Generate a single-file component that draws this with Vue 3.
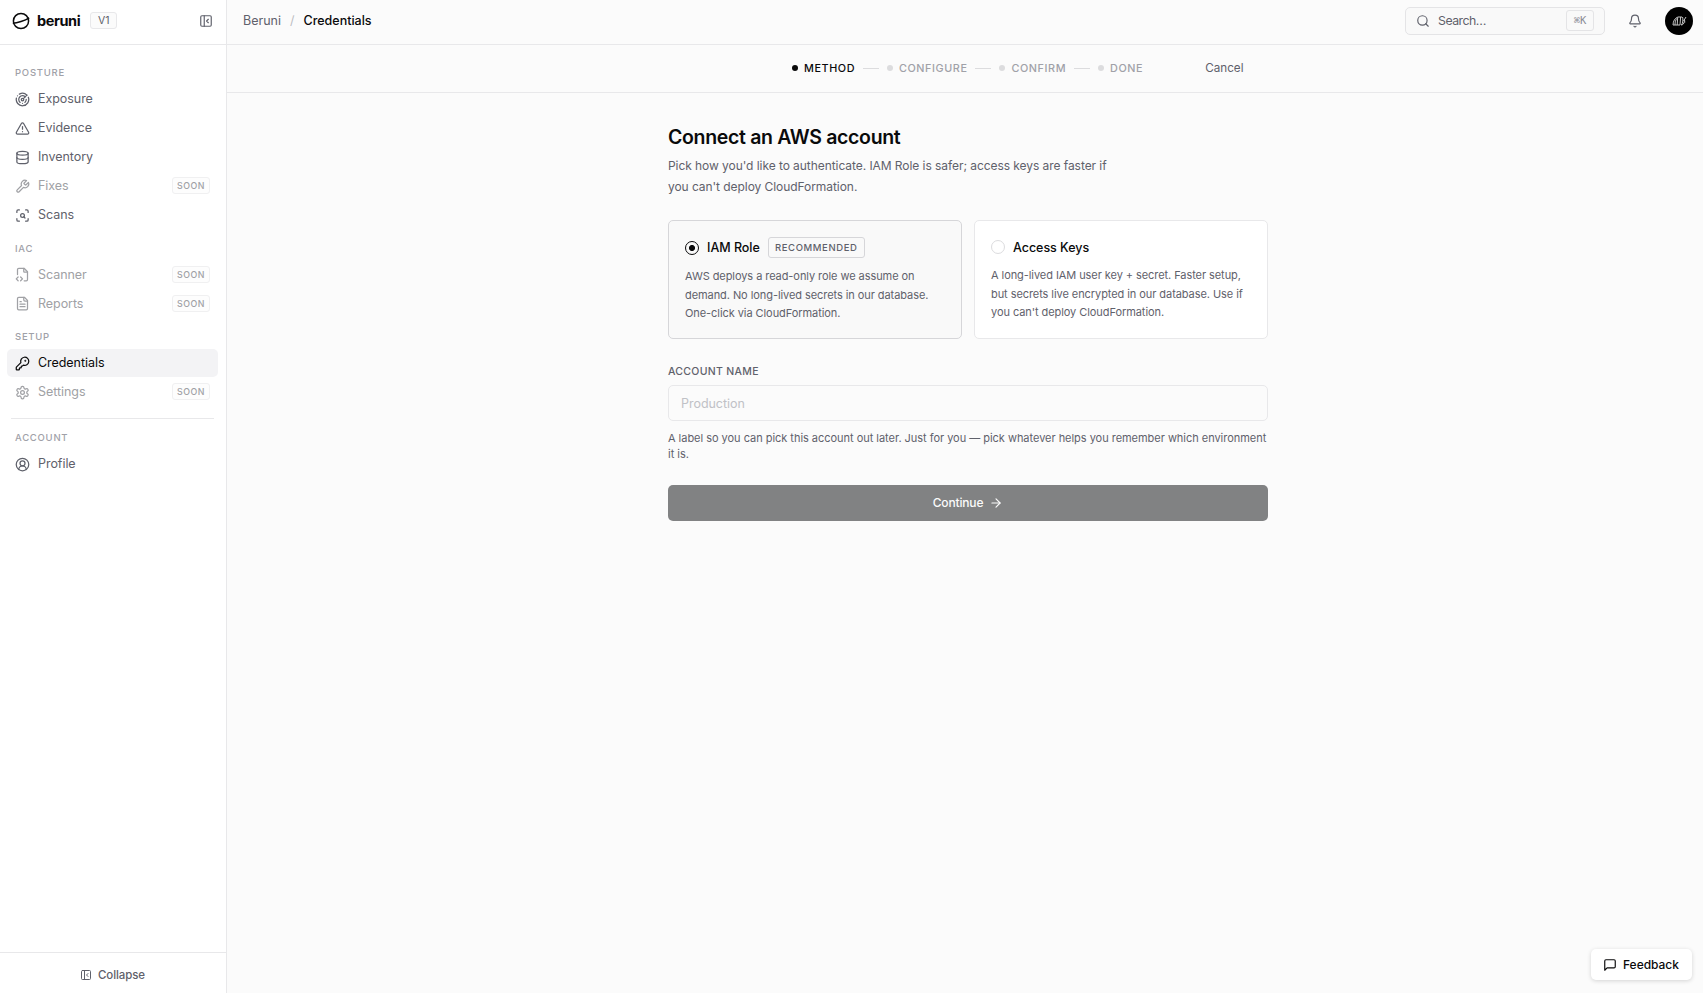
<template>
  <div class="app">
    <aside class="sidebar">
      <div class="brand">
        <svg class="logo" viewBox="0 0 18 18" fill="none" stroke="currentColor" stroke-width="1.5">
          <circle cx="9" cy="9" r="7.6" />
          <path d="M.8 11.3C5 11.2 13 8.6 17.2 5.9" />
        </svg>
        <span class="brand-name">beruni</span>
        <span class="version">V1</span>
        <svg class="toggle icon" viewBox="0 0 24 24" v-html="icons.panel"></svg>
      </div>

      <nav class="nav">
        <section v-for="group in groups" :key="group.title" class="group" :class="{ divided: group.divided }">
          <h2 class="group-title">{{ group.title }}</h2>
          <a v-for="item in group.items" :key="item.label" class="item" :class="{ active: item.active, soon: item.soon }">
            <svg class="icon" viewBox="0 0 24 24" v-html="icons[item.icon]"></svg>
            <span class="item-label">{{ item.label }}</span>
            <span v-if="item.soon" class="soon-badge">SOON</span>
          </a>
        </section>
      </nav>

      <button class="collapse">
        <svg class="icon" viewBox="0 0 24 24" v-html="icons.panel"></svg>
        <span>Collapse</span>
      </button>
    </aside>

    <div class="content">
      <header class="topbar">
        <div class="crumbs">
          <span>Beruni</span>
          <span class="slash">/</span>
          <span class="current">Credentials</span>
        </div>
        <div class="search">
          <svg class="icon" viewBox="0 0 24 24" v-html="icons.search"></svg>
          <span class="search-text">Search…</span>
          <kbd>⌘K</kbd>
        </div>
        <svg class="bell icon" viewBox="0 0 24 24" v-html="icons.bell"></svg>
        <svg class="avatar" viewBox="0 0 28 28" fill="none">
          <circle cx="14" cy="14" r="14" fill="#000" />
          <g stroke="#c4c4c4" stroke-width="1">
            <path d="M8 18c0-4 2-7 5-8M10 18c0-3 .5-5 2-6.5M12.2 18l.5-7.5M15 18l.6-8M8 18h7M13 10h4M17.5 10c.7 2 .5 6-1 8M16 18c2 0 3-1.5 3.3-3.5M18.5 14l2.5-4M19.5 12.5l.3 3" />
          </g>
        </svg>
      </header>

      <div class="steps">
        <ol>
          <li v-for="(step, i) in steps" :key="step" :class="{ on: i === 0 }">
            <span v-if="i > 0" class="line"></span>
            <span class="dot"></span>
            <span class="step-text">{{ step }}</span>
          </li>
        </ol>
        <a class="cancel">Cancel</a>
      </div>

      <main class="main">
        <h1>Connect an AWS account</h1>
        <p class="intro">Pick how you'd like to authenticate. IAM Role is safer; access keys are faster if<br />you can't deploy CloudFormation.</p>

        <div class="methods">
          <div v-for="m in methods" :key="m.id" class="method" :class="{ selected: method === m.id }" @click="method = m.id">
            <div class="method-head">
              <span class="radio"></span>
              <span class="method-name">{{ m.name }}</span>
              <span v-if="m.recommended" class="recommended">RECOMMENDED</span>
            </div>
            <p><template v-for="(line, i) in m.lines" :key="i"><br v-if="i" />{{ line }}</template></p>
          </div>
        </div>

        <label for="account-name">ACCOUNT NAME</label>
        <input id="account-name" v-model="accountName" type="text" placeholder="Production" />
        <p class="hint">A label so you can pick this account out later. Just for you — pick whatever helps you remember which environment<br />it is.</p>

        <button class="continue" :disabled="!accountName">
          <span>Continue</span>
          <svg class="icon" viewBox="0 0 24 24" v-html="icons.arrow"></svg>
        </button>
      </main>
    </div>

    <button class="feedback">
      <svg class="icon" viewBox="0 0 24 24" v-html="icons.message"></svg>
      <span>Feedback</span>
    </button>
  </div>
</template>

<script setup>
import { ref } from 'vue'

const method = ref('iam')
const accountName = ref('')

const steps = ['METHOD', 'CONFIGURE', 'CONFIRM', 'DONE']

const groups = [
  {
    title: 'POSTURE',
    items: [
      { label: 'Exposure', icon: 'radar' },
      { label: 'Evidence', icon: 'alert' },
      { label: 'Inventory', icon: 'database' },
      { label: 'Fixes', icon: 'wrench', soon: true },
      { label: 'Scans', icon: 'scan' }
    ]
  },
  {
    title: 'IAC',
    items: [
      { label: 'Scanner', icon: 'fileCode', soon: true },
      { label: 'Reports', icon: 'fileText', soon: true }
    ]
  },
  {
    title: 'SETUP',
    items: [
      { label: 'Credentials', icon: 'key', active: true },
      { label: 'Settings', icon: 'settings', soon: true }
    ]
  },
  {
    title: 'ACCOUNT',
    divided: true,
    items: [{ label: 'Profile', icon: 'user' }]
  }
]

const methods = [
  {
    id: 'iam',
    name: 'IAM Role',
    recommended: true,
    lines: ['AWS deploys a read-only role we assume on', 'demand. No long-lived secrets in our database.', 'One-click via CloudFormation.']
  },
  {
    id: 'keys',
    name: 'Access Keys',
    lines: ['A long-lived IAM user key + secret. Faster setup,', 'but secrets live encrypted in our database. Use if', "you can't deploy CloudFormation."]
  }
]

const icons = {
  panel: '<rect width="18" height="18" x="3" y="3" rx="2"/><path d="M9 3v18"/><path d="m16 15-3-3 3-3"/>',
  radar: '<path d="M19.07 4.93A10 10 0 0 0 6.99 3.34"/><path d="M4 6h.01"/><path d="M2.29 9.62A10 10 0 1 0 21.31 8.35"/><path d="M16.24 7.76A6 6 0 1 0 8.23 16.67"/><path d="M12 18h.01"/><path d="M17.99 11.66A6 6 0 0 1 15.77 16.67"/><circle cx="12" cy="12" r="2"/><path d="m13.41 10.59 5.66-5.66"/>',
  alert: '<path d="m21.73 18-8-14a2 2 0 0 0-3.48 0l-8 14A2 2 0 0 0 4 21h16a2 2 0 0 0 1.73-3"/><path d="M12 9v4"/><path d="M12 17h.01"/>',
  database: '<ellipse cx="12" cy="5" rx="9" ry="3"/><path d="M3 5v14a9 3 0 0 0 18 0V5"/><path d="M3 12a9 3 0 0 0 18 0"/>',
  wrench: '<path d="M14.7 6.3a1 1 0 0 0 0 1.4l1.6 1.6a1 1 0 0 0 1.4 0l3.77-3.77a6 6 0 0 1-7.94 7.94l-6.91 6.91a2.12 2.12 0 0 1-3-3l6.91-6.91a6 6 0 0 1 7.94-7.94z"/>',
  scan: '<path d="M3 7V5a2 2 0 0 1 2-2h2"/><path d="M17 3h2a2 2 0 0 1 2 2v2"/><path d="M21 17v2a2 2 0 0 1-2 2h-2"/><path d="M7 21H5a2 2 0 0 1-2-2v-2"/><circle cx="12" cy="12" r="3"/><path d="m16 16-1.9-1.9"/>',
  fileCode: '<path d="M4 12.15V4a2 2 0 0 1 2-2h8.5L20 7.5V20a2 2 0 0 1-2 2h-3.35"/><path d="M14 2v5a1 1 0 0 0 1 1h5"/><path d="m5 16-3 3 3 3"/><path d="m9 22 3-3-3-3"/>',
  fileText: '<path d="M15 2H6a2 2 0 0 0-2 2v16a2 2 0 0 0 2 2h12a2 2 0 0 0 2-2V7Z"/><path d="M14 2v4a2 2 0 0 0 2 2h4"/><path d="M10 9H8"/><path d="M16 13H8"/><path d="M16 17H8"/>',
  key: '<path d="M2.586 17.414A2 2 0 0 0 2 18.828V21a1 1 0 0 0 1 1h3a1 1 0 0 0 1-1v-1a1 1 0 0 1 1-1h1a1 1 0 0 0 1-1v-1a1 1 0 0 1 1-1h.172a2 2 0 0 0 1.414-.586l.814-.814a6.5 6.5 0 1 0-4-4z"/><circle cx="16.5" cy="7.5" r=".5" fill="currentColor"/>',
  settings: '<path d="M12.22 2h-.44a2 2 0 0 0-2 2v.18a2 2 0 0 1-1 1.73l-.43.25a2 2 0 0 1-2 0l-.15-.08a2 2 0 0 0-2.73.73l-.22.38a2 2 0 0 0 .73 2.73l.15.1a2 2 0 0 1 1 1.72v.51a2 2 0 0 1-1 1.74l-.15.09a2 2 0 0 0-.73 2.73l.22.38a2 2 0 0 0 2.73.73l.15-.08a2 2 0 0 1 2 0l.43.25a2 2 0 0 1 1 1.73V20a2 2 0 0 0 2 2h.44a2 2 0 0 0 2-2v-.18a2 2 0 0 1 1-1.73l.43-.25a2 2 0 0 1 2 0l.15.08a2 2 0 0 0 2.73-.73l.22-.39a2 2 0 0 0-.73-2.73l-.15-.08a2 2 0 0 1-1-1.74v-.5a2 2 0 0 1 1-1.74l.15-.09a2 2 0 0 0 .73-2.73l-.22-.38a2 2 0 0 0-2.73-.73l-.15.08a2 2 0 0 1-2 0l-.43-.25a2 2 0 0 1-1-1.73V4a2 2 0 0 0-2-2z"/><circle cx="12" cy="12" r="3"/>',
  user: '<path d="M18 20a6 6 0 0 0-12 0"/><circle cx="12" cy="10" r="4"/><circle cx="12" cy="12" r="10"/>',
  search: '<circle cx="11" cy="11" r="8"/><path d="m21 21-4.3-4.3"/>',
  bell: '<path d="M10.268 21a2 2 0 0 0 3.464 0"/><path d="M3.262 15.326A1 1 0 0 0 4 17h16a1 1 0 0 0 .74-1.673C19.41 13.956 18 12.499 18 8A6 6 0 0 0 6 8c0 4.499-1.411 5.956-2.738 7.326"/>',
  arrow: '<path d="M5 12h14"/><path d="m12 5 7 7-7 7"/>',
  message: '<path d="M21 15a2 2 0 0 1-2 2H7l-4 4V5a2 2 0 0 1 2-2h14a2 2 0 0 1 2 2z"/>'
}
</script>

<style>
body {
  background: #fbfbfb;
}
</style>

<style scoped>
.app {
  display: flex;
  height: 993px;
  overflow: hidden;
  background: #fbfbfb;
  color: #5f616b;
  font-family: Inter, 'Liberation Sans', sans-serif;
  font-size: 12.5px;
}
* {
  box-sizing: border-box;
}
h1,
h2,
p,
ol {
  margin: 0;
  padding: 0;
}
button,
input {
  font-family: inherit;
}
.icon {
  flex: none;
  fill: none;
  stroke: currentColor;
  stroke-width: 2;
  stroke-linecap: round;
  stroke-linejoin: round;
}

/* Sidebar */
.sidebar {
  display: flex;
  flex-direction: column;
  flex: none;
  width: 227px;
  background: #fff;
  border-right: 1px solid #e8e8ea;
}
.brand {
  display: flex;
  align-items: center;
  height: 45px;
  padding: 0 13px 3px 12px;
  border-bottom: 1px solid #e8e8ea;
}
.logo {
  width: 18px;
  height: 18px;
  color: #0a0a0b;
}
.brand-name {
  margin-left: 7px;
  color: #0a0a0b;
  font-size: 14.5px;
  font-weight: 700;
  letter-spacing: -0.4px;
}
.version {
  margin-left: 10px;
  width: 27px;
  height: 17px;
  border: 1px solid #e8e8ea;
  border-radius: 3px;
  background: #fbfbfb;
  font-size: 10.5px;
  line-height: 16px;
  text-align: center;
}
.toggle {
  margin-left: auto;
  width: 14px;
  height: 14px;
}
.nav {
  flex: 1;
  padding: 22px 8px 0 7px;
}
.group {
  display: flex;
  flex-direction: column;
  gap: 1px;
  margin-bottom: 13.5px;
}
.group-title {
  height: 11px;
  margin-bottom: 6px;
  padding-left: 8px;
  color: #a0a1a8;
  font-size: 9.5px;
  font-weight: 500;
  line-height: 12px;
  letter-spacing: 0.75px;
}
.divided {
  margin: -1.5px 4px 0;
  padding-top: 13px;
  border-top: 1px solid #e8e8ea;
}
.divided .group-title,
.divided .item {
  padding-left: 4px;
}
.item {
  display: flex;
  align-items: center;
  height: 28px;
  padding: 0 8px;
  border-radius: 5px;
}
.item .icon {
  width: 15px;
  height: 15px;
}
.item-label {
  margin-left: 8px;
  padding-bottom: 1px;
  letter-spacing: -0.05px;
}
.active {
  background: #f3f3f5;
  color: #0a0a0b;
}
.soon {
  color: #a0a1a5;
}
.soon-badge {
  margin-left: auto;
  margin-bottom: 1px;
  width: 38px;
  height: 17px;
  border: 1px solid #f0f0f1;
  border-radius: 3px;
  background: #fdfdfd;
  font-size: 8.8px;
  font-weight: 500;
  line-height: 15px;
  letter-spacing: 0.5px;
  text-align: center;
}
.collapse {
  display: flex;
  align-items: center;
  justify-content: center;
  gap: 6px;
  height: 41px;
  padding: 4px 1px 0 0;
  border: none;
  border-top: 1px solid #e8e8ea;
  background: none;
  color: #5f616b;
  font-size: 11.5px;
  font-weight: 500;
  letter-spacing: -0.1px;
}
.collapse .icon {
  width: 12px;
  height: 12px;
}

/* Top bar */
.content {
  flex: 1;
}
.topbar {
  display: flex;
  align-items: center;
  height: 45px;
  padding: 0 10px 3px 16px;
  border-bottom: 1px solid #e8e8ea;
}
.crumbs {
  display: flex;
  gap: 9px;
  margin-right: auto;
  padding-bottom: 1px;
}
.slash {
  color: #bcbdc2;
}
.current {
  color: #0a0a0b;
  font-weight: 500;
}
.search {
  display: flex;
  align-items: center;
  width: 200px;
  height: 28px;
  padding: 0 10px;
  border: 1px solid #e4e4e6;
  border-radius: 5px;
  background: #f9f9f9;
}
.search .icon {
  width: 14px;
  height: 14px;
}
.search-text {
  margin-left: 8px;
  font-size: 12.3px;
  letter-spacing: -0.5px;
}
kbd {
  margin-left: auto;
  width: 28px;
  height: 21px;
  border: 1px solid #e4e4e6;
  border-radius: 3px;
  color: #8b8d96;
  font: 10.5px/19px 'DejaVu Sans Mono', monospace;
  text-align: center;
}
.bell {
  width: 14px;
  height: 14px;
  margin: 0 23px;
}
.avatar {
  width: 28px;
  height: 28px;
}

/* Stepper */
.steps {
  display: flex;
  align-items: center;
  height: 48px;
  padding: 0 0 1px 565px;
  border-bottom: 1px solid #e8e8ea;
}
.steps ol,
.steps li {
  display: flex;
  align-items: center;
  list-style: none;
}
.dot {
  width: 6px;
  height: 6px;
  border-radius: 50%;
  background: #dcdcde;
}
.line {
  width: 16px;
  height: 1px;
  margin: 0 8px;
  background: #dcdcde;
}
.step-text {
  margin-left: 6px;
  color: #a0a1a8;
  font-size: 10.8px;
  font-weight: 500;
  letter-spacing: 0.58px;
}
.on .dot {
  background: #0a0a0b;
}
.on .step-text {
  color: #0a0a0b;
}
.cancel {
  margin-left: 62px;
  padding-bottom: 1px;
  font-size: 11.7px;
}

/* Form */
.main {
  width: 600px;
  margin-left: 441px;
  padding-top: 32px;
}
h1 {
  color: #0a0a0b;
  font-size: 19.5px;
  font-weight: 600;
  line-height: 24px;
  letter-spacing: -0.33px;
}
.intro {
  margin-top: 6px;
  font-size: 12px;
  line-height: 21px;
  letter-spacing: -0.06px;
  white-space: nowrap;
}
.methods {
  display: grid;
  grid-template-columns: repeat(2, minmax(0, 1fr));
  gap: 12px;
  margin-top: 23px;
}
.method {
  height: 119px;
  padding: 16px;
  border: 1px solid #e8e8ea;
  border-radius: 5px;
  background: #fff;
}
.method.selected {
  border-color: #d6d6d9;
  background: #f9f9f9;
}
.method-head {
  display: flex;
  align-items: center;
  height: 20px;
}
.selected .method-head {
  height: 21px;
}
.radio {
  width: 14px;
  height: 14px;
  border: 1px solid #dcdcde;
  border-radius: 50%;
}
.selected .radio {
  border-color: #0a0a0b;
  background: radial-gradient(circle, #0a0a0b 2.7px, transparent 3.3px);
}
.method-name {
  margin-left: 8px;
  color: #0a0a0b;
  font-weight: 500;
  letter-spacing: -0.03px;
}
.recommended {
  width: 97px;
  height: 21px;
  margin-left: 8px;
  border: 1px solid #d6d6d9;
  border-radius: 3px;
  font-size: 9.5px;
  font-weight: 500;
  line-height: 20px;
  letter-spacing: 0.6px;
  text-align: center;
}
.method p {
  margin-top: 9px;
  font-size: 11px;
  line-height: 18.7px;
  letter-spacing: -0.07px;
  white-space: nowrap;
}
label {
  display: block;
  margin-top: 26px;
  font-size: 10.5px;
  font-weight: 500;
  line-height: 14px;
  letter-spacing: 0.3px;
}
input {
  display: block;
  width: 100%;
  height: 36px;
  margin-top: 6px;
  padding: 0 12px;
  border: 1px solid #e8e8ea;
  border-radius: 5px;
  background: #fbfbfb;
  font-size: 12.5px;
  letter-spacing: -0.03px;
}
input::placeholder {
  color: #c0c1c6;
}
.hint {
  margin-top: 9px;
  font-size: 11px;
  line-height: 16px;
  letter-spacing: -0.03px;
  white-space: nowrap;
}
.continue {
  display: flex;
  align-items: center;
  justify-content: center;
  gap: 6px;
  width: 100%;
  height: 36px;
  margin-top: 23px;
  padding-bottom: 2px;
  border: none;
  border-radius: 5px;
  background: #818283;
  color: #fbfbfb;
  font-size: 12px;
  font-weight: 500;
  letter-spacing: -0.15px;
}
.continue .icon {
  width: 14px;
  height: 14px;
}

.feedback {
  position: absolute;
  right: 11px;
  bottom: 13px;
  display: flex;
  align-items: center;
  gap: 6px;
  width: 101px;
  height: 31px;
  padding: 0 12px;
  border: none;
  border-radius: 5px;
  background: #fff;
  box-shadow: 0 1px 4px rgba(0, 0, 0, 0.16);
  color: #0a0a0b;
  font-size: 12px;
  font-weight: 500;
  letter-spacing: -0.03px;
}
.feedback .icon {
  width: 14px;
  height: 14px;
}
</style>
